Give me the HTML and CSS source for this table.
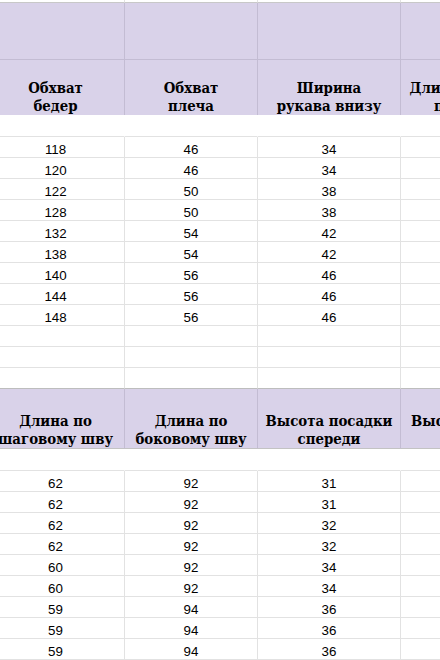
FILE: index.html
```html
<!DOCTYPE html>
<html lang="ru">
<head>
<meta charset="utf-8">
<link rel="stylesheet" href="styles.css">
</head>
<body>
<div class="sheet">
  <div class="row top"><div class="c"></div><div class="c"></div><div class="c"></div><div class="c"></div></div>
  <div class="row head-a"><div class="c"></div><div class="c"></div><div class="c"></div><div class="c"></div></div>
  <div class="row head-b">
    <div class="c">Обхват<br>бедер</div>
    <div class="c">Обхват<br>плеча</div>
    <div class="c">Ширина<br>рукава внизу</div>
    <div class="c">Длина рукава от<br>плечевого</div>
  </div>
  <div class="row gap"><div class="c"></div><div class="c"></div><div class="c"></div><div class="c"></div></div>
  <div class="row data"><div class="c">118</div><div class="c">46</div><div class="c">34</div><div class="c"></div></div>
  <div class="row data"><div class="c">120</div><div class="c">46</div><div class="c">34</div><div class="c"></div></div>
  <div class="row data"><div class="c">122</div><div class="c">50</div><div class="c">38</div><div class="c"></div></div>
  <div class="row data"><div class="c">128</div><div class="c">50</div><div class="c">38</div><div class="c"></div></div>
  <div class="row data"><div class="c">132</div><div class="c">54</div><div class="c">42</div><div class="c"></div></div>
  <div class="row data"><div class="c">138</div><div class="c">54</div><div class="c">42</div><div class="c"></div></div>
  <div class="row data"><div class="c">140</div><div class="c">56</div><div class="c">46</div><div class="c"></div></div>
  <div class="row data"><div class="c">144</div><div class="c">56</div><div class="c">46</div><div class="c"></div></div>
  <div class="row data"><div class="c">148</div><div class="c">56</div><div class="c">46</div><div class="c"></div></div>
  <div class="row data"><div class="c"></div><div class="c"></div><div class="c"></div><div class="c"></div></div>
  <div class="row data"><div class="c"></div><div class="c"></div><div class="c"></div><div class="c"></div></div>
  <div class="row data pre-head"><div class="c"></div><div class="c"></div><div class="c"></div><div class="c"></div></div>
  <div class="row head-c">
    <div class="c">Длина по<br>шаговому шву</div>
    <div class="c">Длина по<br>боковому шву</div>
    <div class="c">Высота посадки<br>спереди</div>
    <div class="c">Высота посадки<br>сзади</div>
  </div>
  <div class="row gap"><div class="c"></div><div class="c"></div><div class="c"></div><div class="c"></div></div>
  <div class="row data"><div class="c">62</div><div class="c">92</div><div class="c">31</div><div class="c"></div></div>
  <div class="row data"><div class="c">62</div><div class="c">92</div><div class="c">31</div><div class="c"></div></div>
  <div class="row data"><div class="c">62</div><div class="c">92</div><div class="c">32</div><div class="c"></div></div>
  <div class="row data"><div class="c">62</div><div class="c">92</div><div class="c">32</div><div class="c"></div></div>
  <div class="row data"><div class="c">60</div><div class="c">92</div><div class="c">34</div><div class="c"></div></div>
  <div class="row data"><div class="c">60</div><div class="c">92</div><div class="c">34</div><div class="c"></div></div>
  <div class="row data"><div class="c">59</div><div class="c">94</div><div class="c">36</div><div class="c"></div></div>
  <div class="row data"><div class="c">59</div><div class="c">94</div><div class="c">36</div><div class="c"></div></div>
  <div class="row data"><div class="c">59</div><div class="c">94</div><div class="c">36</div><div class="c"></div></div>
</div>
</body>
</html>
```

FILE: styles.css
```css
html, body {
  margin: 0;
  padding: 0;
  background: #ffffff;
  overflow: hidden;
}

.sheet {
  width: 600px;
  margin-left: -13px;
}

.row {
  display: grid;
  grid-template-columns: 138px 133px 143px 148px;
}

.c {
  box-sizing: border-box;
  border-right: 1px solid #e2e2e2;
  border-bottom: 1px solid #e2e2e2;
  text-align: center;
  display: flex;
  flex-direction: column;
  justify-content: flex-end;
  align-items: center;
  overflow: hidden;
  white-space: nowrap;
}

.top .c {
  height: 3px;
  border-bottom-color: #c8c8c8;
}

.head-a .c,
.head-b .c,
.head-c .c {
  background: #d9d2e9;
  border-right-color: #c3bcd3;
  border-bottom-color: #c3bcd3;
  font-family: "DejaVu Serif Condensed", "DejaVu Serif", serif;
  font-stretch: condensed;
  font-weight: bold;
  font-size: 14.8px;
  line-height: 18px;
  color: #000;
  padding-bottom: 0;
}

.head-a .c {
  height: 57px;
}

.head-b .c {
  height: 55px;
  border-bottom: none;
}

.head-c .c {
  height: 60px;
  border-bottom-color: #c3c3c3;
}

.gap .c {
  height: 22px;
  border-right-color: #ffffff;
}

.data .c {
  height: 21px;
  font-family: "Liberation Sans", Arial, sans-serif;
  font-size: 13.33px;
  line-height: 15px;
  color: #000;
  padding-bottom: 0;
}

.pre-head .c {
  border-bottom-color: #bdbdbd;
}
```
